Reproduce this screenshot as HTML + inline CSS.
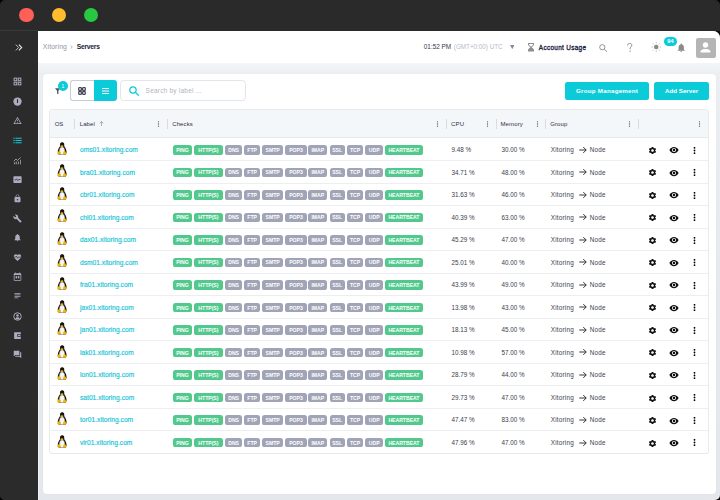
<!DOCTYPE html>
<html><head><meta charset="utf-8">
<style>
*{box-sizing:border-box;margin:0;padding:0}
html,body{width:720px;height:500px;overflow:hidden;background:#000;font-family:"Liberation Sans",sans-serif}
.a{position:absolute}
#win{position:absolute;left:0;top:0;width:720px;height:500px;background:#2a2a2a;border-radius:5px;overflow:hidden}
.tl{position:absolute;top:7.8px;width:14.5px;height:14.5px;border-radius:50%}
#side{position:absolute;left:0;top:30px;width:37.5px;height:470px;background:#2b2b2b;border-top:1px solid #3a3a3a}
.si{position:absolute;left:12.9px;width:9px;height:9px}
.si svg,.hk svg,svg{display:block}
#main{position:absolute;left:37.5px;top:31px;width:682.5px;height:469px;background:linear-gradient(180deg,#f4f6f8 31px,#eceff2 42px,#e7eaee 200px,#e4e7eb 469px);border-top-right-radius:7px;overflow:hidden}
#hdr{position:absolute;left:0;top:0;width:100%;height:31.5px;background:#fff}
#lstrip{position:absolute;left:0;top:31px;width:1.5px;height:438px;background:#f1f3f6}
#card{position:absolute;left:5px;top:42.5px;width:673px;height:420px;background:#fff;border-radius:4px;box-shadow:0 0 2px rgba(40,50,70,.06)}
#tbl{position:absolute;left:49.5px;top:109.5px;width:659.3px;height:344px;border-radius:3px;overflow:hidden}
#tblb{position:absolute;left:49px;top:109px;width:660px;height:345px;border:1px solid #e9eaec;border-radius:3px}
#th{position:absolute;left:0;top:0;width:100%;height:28px;background:#f4f7fa;border-bottom:1px solid #e8e9eb}
.hc{position:absolute;top:11px;font-size:6px;color:#2d2f45;line-height:7px;white-space:nowrap;letter-spacing:.12px}
.sep{position:absolute;top:9.5px;width:1px;height:9.5px;background:#d9dce2}
.hk{position:absolute;top:11px}
.row{position:absolute;left:0;width:659px;height:22.55px;border-bottom:1px solid #eceef1}
.ab{position:absolute;line-height:0}
.ab svg{display:block}
.lbl{position:absolute;top:7.5px;font-size:6.6px;line-height:7px;color:#12c4d7;white-space:nowrap;letter-spacing:.04px;-webkit-text-stroke:.15px #12c4d7}
.txt{position:absolute;top:7.6px;font-size:6.3px;line-height:7px;color:#3b3d4c;white-space:nowrap}
.bd{position:absolute;top:6.6px;height:9.6px;border-radius:2.6px;color:#fff;font-size:5.1px;font-weight:bold;line-height:9.6px;padding-top:.8px;text-align:center;white-space:nowrap}
.bd.g{background:#52c98c}
.bd.s{background:#a1a4b6}
.btn{position:absolute;top:82px;height:17.5px;background:#0ccbd9;border-radius:2.5px;color:#fff;font-size:6.2px;font-weight:bold;line-height:17.5px;text-align:center;white-space:nowrap}
</style></head><body>
<div id="win">
 <div class="tl" style="left:19px;background:#fe5f57"></div>
 <div class="tl" style="left:51.8px;background:#febc2e"></div>
 <div class="tl" style="left:83.8px;background:#28c840"></div>

 <div id="side">
  <svg class="a" style="left:15px;top:12.6px" width="8" height="7" viewBox="0 0 8 7"><path d="M0.8 0.6L3.6 3.5L0.8 6.4" fill="none" stroke="#bdbdbd" stroke-width="1"/><path d="M3.9 0.6L6.7 3.5L3.9 6.4" fill="none" stroke="#e6e6e6" stroke-width="1.1"/></svg>
  <div class="si" style="top:46.1px"><svg width="9" height="9" viewBox="0 0 24 24"><g fill="none" stroke="#aeabc0" stroke-width="2.6"><rect x="3" y="3" width="7" height="7"/><rect x="14" y="3" width="7" height="7"/><rect x="3" y="14" width="7" height="7"/><rect x="14" y="14" width="7" height="7"/></g></svg></div><div class="si" style="top:65.7px"><svg width="9" height="9" viewBox="0 0 24 24"><circle cx="12" cy="12" r="11" fill="#aeabc0"/><path d="M12 6v10" stroke="#2b2b2b" stroke-width="3"/></svg></div><div class="si" style="top:85.0px"><svg width="9" height="9" viewBox="0 0 24 24"><path fill="#aeabc0" d="M12 5.99L19.53 19H4.47L12 5.99M12 2L1 21h22L12 2zm1 14h-2v2h2v-2zm0-6h-2v4h2v-4z"/></svg></div><div class="si" style="top:104.5px"><svg width="9" height="9" viewBox="0 0 24 24"><path fill="#14cad9" d="M1 13.5h3.5v-3H1zm0 6h3.5v-3H1zm0-12h3.5v-3H1zm5.5 6H23v-3H6.5zm0 6H23v-3H6.5zm0-15v3H23v-3z"/></svg></div><div class="si" style="top:124.5px"><svg width="9" height="9" viewBox="0 0 24 24"><path fill="none" stroke="#aeabc0" stroke-width="2.2" d="M2 14l6-6 4 4 8-8"/><path fill="#aeabc0" d="M3 22v-4l3-3v7zM9 22v-8l2 2v6zM14 22v-6l2-2v8zM19 22V11l2-2v13z"/></svg></div><div class="si" style="top:143.8px"><svg width="9" height="9" viewBox="0 0 24 24"><rect x="1" y="3" width="22" height="18" rx="2" fill="#aeabc0"/><path d="M4 13h4l2-3 3 5 2-3h5" fill="none" stroke="#2b2b2b" stroke-width="1.8"/></svg></div><div class="si" style="top:162.9px"><svg width="9" height="9" viewBox="0 0 24 24"><path fill="#aeabc0" d="M18 8h-1V6c0-2.76-2.24-5-5-5S7 3.24 7 6v2H6c-1.1 0-2 .9-2 2v10c0 1.1.9 2 2 2h12c1.1 0 2-.9 2-2V10c0-1.1-.9-2-2-2zm-6 9c-1.1 0-2-.9-2-2s.9-2 2-2 2 .9 2 2-.9 2-2 2zm3.1-9H8.9V6c0-1.71 1.39-3.1 3.1-3.1 1.71 0 3.1 1.39 3.1 3.1v2z"/></svg></div><div class="si" style="top:183.0px"><svg width="9" height="9" viewBox="0 0 24 24"><path fill="#aeabc0" d="M22.7 19l-9.1-9.1c.9-2.3.4-5-1.5-6.9-2-2-5-2.4-7.4-1.3L9 6 6 9 1.6 4.7C.4 7.1.9 10.1 2.9 12.1c1.9 1.9 4.6 2.4 6.9 1.5l9.1 9.1c.4.4 1 .4 1.4 0l2.3-2.3c.5-.4.5-1.1.1-1.4z"/></svg></div><div class="si" style="top:202.4px"><svg width="9" height="9" viewBox="0 0 24 24"><path fill="#aeabc0" d="M12 22c1.1 0 2-.9 2-2h-4c0 1.1.89 2 2 2zm6-6v-5c0-3.07-1.64-5.64-4.5-6.32V4c0-.83-.67-1.5-1.5-1.5s-1.5.67-1.5 1.5v.68C7.63 5.36 6 7.92 6 11v5l-2 2v1h16v-1l-2-2z"/></svg></div><div class="si" style="top:221.9px"><svg width="9" height="9" viewBox="0 0 24 24"><path fill="#aeabc0" d="M12 21.35l-1.45-1.32C5.4 15.36 2 12.28 2 8.5 2 5.42 4.42 3 7.5 3c1.74 0 3.41.81 4.5 2.09C13.09 3.81 14.76 3 16.5 3 19.58 3 22 5.42 22 8.5c0 3.78-3.4 6.86-8.55 11.54L12 21.35z"/><path d="M2 11h5l2-3 3 6 2-3h8" fill="none" stroke="#2b2b2b" stroke-width="1.8"/></svg></div><div class="si" style="top:241.4px"><svg width="9" height="9" viewBox="0 0 24 24"><path fill="#aeabc0" d="M20 3h-1V1h-2v2H7V1H5v2H4c-1.1 0-2 .9-2 2v16c0 1.1.9 2 2 2h16c1.1 0 2-.9 2-2V5c0-1.1-.9-2-2-2zm0 18H4V8h16v13z"/><rect x="7" y="11" width="4" height="6" fill="#aeabc0"/><rect x="13" y="11" width="4" height="6" fill="#aeabc0"/></svg></div><div class="si" style="top:260.4px"><svg width="9" height="9" viewBox="0 0 24 24"><path fill="#aeabc0" d="M14 17H4v2h10v-2zm6-8H4v2h16V9zM4 15h16v-2H4v2zM4 5v2h16V5H4z"/></svg></div><div class="si" style="top:280.5px"><svg width="9" height="9" viewBox="0 0 24 24"><circle cx="12" cy="12" r="10" fill="none" stroke="#aeabc0" stroke-width="2.6"/><circle cx="12" cy="9.3" r="3.3" fill="#aeabc0"/><path d="M5.8 17.6c1.6-2.4 3.6-3.4 6.2-3.4s4.6 1 6.2 3.4c-1.6 1.7-3.8 2.6-6.2 2.6s-4.6-.9-6.2-2.6z" fill="#aeabc0"/></svg></div><div class="si" style="top:300.0px"><svg width="9" height="9" viewBox="0 0 24 24"><rect x="3" y="3" width="18" height="18" rx="1.5" fill="#aeabc0"/><rect x="11" y="8.5" width="12" height="7" rx="1" fill="#2b2b2b"/><rect x="13" y="10.5" width="7" height="3" fill="#aeabc0"/><rect x="7" y="7" width="3" height="10" fill="#2b2b2b" opacity="0"/></svg></div><div class="si" style="top:319.2px"><svg width="9" height="9" viewBox="0 0 24 24"><path fill="#aeabc0" d="M21 6h-2v9H6v2c0 .55.45 1 1 1h11l4 4V7c0-.55-.45-1-1-1zm-4 6V3c0-.55-.45-1-1-1H3c-.55 0-1 .45-1 1v14l4-4h10c.55 0 1-.45 1-1z"/></svg></div>
 </div>

 <div class="a" style="left:710px;top:31px;width:10px;height:10px;background:#0c0c0c"></div>
 <div id="main">
  <div id="hdr"></div><div id="lstrip"></div>
  <div id="card"></div>
 </div>

 <!-- header content (page coords) -->
 <div class="a" style="left:42.8px;top:43.3px;font-size:6.8px;line-height:8px;color:#9294a9;white-space:nowrap;letter-spacing:.15px">Xitoring</div>
 <svg class="a" style="left:70.2px;top:45px" width="3" height="4" viewBox="0 0 3 4"><path d="M0.5 0.3L2.3 2L0.5 3.7" fill="none" stroke="#9a9cb0" stroke-width=".7"/></svg>
 <div class="a" style="left:76.8px;top:43.3px;font-size:6.8px;line-height:8px;color:#1c1e3c;font-weight:bold;white-space:nowrap;letter-spacing:-.3px">Servers</div>

 <div class="a" style="left:423.8px;top:43.4px;font-size:6.4px;line-height:8px;color:#34364c;white-space:nowrap">01:52 PM</div>
 <div class="a" style="left:453.8px;top:43.4px;font-size:6.4px;line-height:8px;color:#b7bac9;white-space:nowrap;letter-spacing:-.05px">(GMT+0:00) UTC</div>
 <svg class="a" style="left:509.7px;top:45px" width="4.5" height="4.2" viewBox="0 0 4.5 4.2"><path d="M0 0H4.5L2.25 4.2z" fill="#8587a3"/></svg>
 <svg class="a" style="left:527.5px;top:43px" width="6" height="8.6" viewBox="0 0 6 8.6"><path d="M0 0H6V1.6C6 2.6 4.2 3.8 3.6 4.3C4.2 4.8 6 6 6 7V8.6H0V7C0 6 1.8 4.8 2.4 4.3C1.8 3.8 0 2.6 0 1.6z" fill="#8e8e8e"/><path d="M1 .9H5V1.5C5 2.1 3.6 3.1 3 3.6C2.4 3.1 1 2.1 1 1.5z" fill="#fff"/></svg>
 <div class="a" style="left:538.8px;top:43.5px;font-size:6.4px;line-height:8px;color:#20223f;white-space:nowrap;-webkit-text-stroke:.3px #20223f;letter-spacing:.32px">Account Usage</div>
 <svg class="a" style="left:598.5px;top:43.5px" width="9" height="8" viewBox="0 0 9 8"><circle cx="3.3" cy="3.2" r="2.6" fill="none" stroke="#8a8a8a" stroke-width=".9"/><path d="M5.2 5.1L7.9 7.7" stroke="#8a8a8a" stroke-width="1"/></svg>
 <svg class="a" style="left:627.4px;top:43.2px" width="5.4" height="9" viewBox="0 0 5.4 9"><path d="M.6 2.4C.6 1.1 1.5.4 2.7.4s2.1.8 2.1 1.9c0 1.5-1.7 1.6-1.7 3.4v.6" fill="none" stroke="#858585" stroke-width="1"/><circle cx="3.1" cy="8.2" r=".65" fill="#858585"/></svg>
 <svg class="a" style="left:650.5px;top:42.2px" width="10.5" height="10" viewBox="0 0 10.5 10"><circle cx="5.25" cy="5" r="2.3" fill="#8a8a8a"/><g stroke="#a0a0a0" stroke-width=".75"><path d="M5.25 .2V1.5M5.25 8.5V9.8M.4 5H1.7M8.8 5H10.1M1.8 1.5L2.7 2.4M7.8 7.6L8.7 8.5M1.8 8.5L2.7 7.6M7.8 2.4L8.7 1.5"/></g></svg>
 <div class="a" style="left:677px;top:42.8px"><svg width="8.5" height="9.5" viewBox="0 0 24 26"><path fill="#8a8a8a" d="M12 25.5c1.4 0 2.5-1.1 2.5-2.5h-5c0 1.4 1.1 2.5 2.5 2.5zm7.5-7.5v-6.2c0-3.8-2-7-5.6-7.8V3a1.9 1.9 0 0 0-3.8 0v1c-3.6.8-5.6 4-5.6 7.8V18L2 20.5v1.3h20v-1.3z"/></svg></div>
 <div class="a" style="left:663.8px;top:36.7px;width:13.2px;height:9.3px;border-radius:4.6px;background:#0ccbd9;color:#fff;font-size:5.6px;font-weight:bold;line-height:9.3px;text-align:center">94</div>
 <div class="a" style="left:695.8px;top:37.6px;width:20.2px;height:20px;background:#b5b5b5;border-radius:2px"></div>
 <svg class="a" style="left:698.2px;top:39.9px" width="15" height="15" viewBox="0 0 24 24"><circle cx="12" cy="8" r="4.4" fill="#fff"/><path fill="#fff" d="M12 14.2c-2.9 0-8 1.3-8 4v1.8h16v-1.8c0-2.7-5.1-4-8-4z"/></svg>

 <!-- toolbar -->
 <svg class="a" style="left:54.5px;top:87.6px" width="5.4" height="6.4" viewBox="0 0 5.4 6.4"><path d="M0 .2H5.4L3.4 2.8V6.4L2 5.6V2.8z" fill="#555"/></svg>
 <div class="a" style="left:58px;top:80.8px;width:10px;height:10px;border-radius:50%;background:#0ccbd9;color:#fff;font-size:5px;line-height:10px;text-align:center">1</div>
 <div class="a" style="left:70px;top:80.4px;width:25px;height:20.3px;border:1px solid #c9ccd6;border-right:none;border-radius:3px 0 0 3px;background:#fff"></div>
 <div class="a" style="left:93.8px;top:80.4px;width:23.2px;height:20.3px;background:#0ccbd9;border-radius:0 3px 3px 0"></div>
 </div>
 <svg class="a" style="left:78px;top:87px" width="8" height="8" viewBox="0 0 8 8"><g fill="none" stroke="#45455a" stroke-width="1.2"><rect x=".7" y=".7" width="2.7" height="2.7" rx=".5"/><rect x="4.6" y=".7" width="2.7" height="2.7" rx=".5"/><rect x=".7" y="4.6" width="2.7" height="2.7" rx=".5"/><rect x="4.6" y="4.6" width="2.7" height="2.7" rx=".5"/></g></svg>
 <svg class="a" style="left:101.9px;top:88px" width="7.2" height="6" viewBox="0 0 7.2 6"><path d="M0 .5H7.2M0 3H7.2M0 5.5H7.2" stroke="#fff" stroke-width="1"/></svg>
 <div class="a" style="left:120px;top:79.6px;width:125.6px;height:21.9px;border:1px solid #e3e5ec;border-radius:3.5px;background:#fff"></div>
 <svg class="a" style="left:129.2px;top:85.7px" width="10.5" height="10" viewBox="0 0 10.5 10"><circle cx="4" cy="4" r="3.2" fill="none" stroke="#0ccbd9" stroke-width="1.2"/><path d="M6.3 6.3L9.8 9.6" stroke="#0ccbd9" stroke-width="1.3"/></svg>
 <div class="a" style="left:145.6px;top:87px;font-size:6.5px;line-height:8px;color:#b2b4c2;white-space:nowrap;letter-spacing:.22px">Search by label ...</div>
 <div class="btn" style="left:564.9px;width:84.4px;letter-spacing:.25px">Group Management</div>
 <div class="btn" style="left:653.8px;width:55.5px">Add Server</div>

 <!-- table -->
 <div id="tbl">
  <div id="th">
   <div class="hc" style="left:5.2px;letter-spacing:-.15px">OS</div>
   <div class="sep" style="left:24.4px"></div>
   <div class="hc" style="left:30.2px">Label</div>
   <svg class="a" style="left:49.5px;top:11.7px" width="5" height="5" viewBox="0 0 5 5"><path d="M2.5 5V.6M.7 2.3L2.5 .5L4.3 2.3" fill="none" stroke="#888" stroke-width=".65"/></svg>
   <div class="hk" style="left:107.8px"><svg viewBox="0 0 3 6" width="3" height="6"><circle cx="1.5" cy=".8" r=".65" fill="#5c5c66"/><circle cx="1.5" cy="3" r=".65" fill="#5c5c66"/><circle cx="1.5" cy="5.2" r=".65" fill="#5c5c66"/></svg></div>
   <div class="sep" style="left:117.4px"></div>
   <div class="hc" style="left:122.7px">Checks</div>
   <div class="hk" style="left:386.3px"><svg viewBox="0 0 3 6" width="3" height="6"><circle cx="1.5" cy=".8" r=".65" fill="#5c5c66"/><circle cx="1.5" cy="3" r=".65" fill="#5c5c66"/><circle cx="1.5" cy="5.2" r=".65" fill="#5c5c66"/></svg></div>
   <div class="sep" style="left:396.7px"></div>
   <div class="hc" style="left:401.6px">CPU</div>
   <div class="hk" style="left:436.3px"><svg viewBox="0 0 3 6" width="3" height="6"><circle cx="1.5" cy=".8" r=".65" fill="#5c5c66"/><circle cx="1.5" cy="3" r=".65" fill="#5c5c66"/><circle cx="1.5" cy="5.2" r=".65" fill="#5c5c66"/></svg></div>
   <div class="sep" style="left:446px"></div>
   <div class="hc" style="left:451px">Memory</div>
   <div class="hk" style="left:486.1px"><svg viewBox="0 0 3 6" width="3" height="6"><circle cx="1.5" cy=".8" r=".65" fill="#5c5c66"/><circle cx="1.5" cy="3" r=".65" fill="#5c5c66"/><circle cx="1.5" cy="5.2" r=".65" fill="#5c5c66"/></svg></div>
   <div class="sep" style="left:495.6px"></div>
   <div class="hc" style="left:500.7px">Group</div>
   <div class="hk" style="left:578.6px"><svg viewBox="0 0 3 6" width="3" height="6"><circle cx="1.5" cy=".8" r=".65" fill="#5c5c66"/><circle cx="1.5" cy="3" r=".65" fill="#5c5c66"/><circle cx="1.5" cy="5.2" r=".65" fill="#5c5c66"/></svg></div>
   <div class="sep" style="left:588.4px"></div>
   <div class="hk" style="left:648.6px"><svg viewBox="0 0 3 6" width="3" height="6"><circle cx="1.5" cy=".8" r=".65" fill="#5c5c66"/><circle cx="1.5" cy="3" r=".65" fill="#5c5c66"/><circle cx="1.5" cy="5.2" r=".65" fill="#5c5c66"/></svg></div>
   <div class="sep" style="left:658px"></div>
  </div>
  <div class="a" style="left:0;top:-109.5px">
<div class="row" style="top:138.50px"><div class="ab" style="left:3.7px;top:1.4px"><svg class="tux" viewBox="0 0 20 18" width="17.6" height="17.1" preserveAspectRatio="none"><path d="M10.1 2.5c-1.3 0-2.1 1-2.1 2.4 0 .9.1 1.4-.4 2.2C6.6 8.6 5.4 10.4 5.4 12.6c0 1.1.3 2 .8 2.7h8.4c.5-.7.8-1.6.8-2.7 0-2.2-1.2-4-2.2-5.5-.5-.8-.4-1.3-.4-2.2 0-1.4-.8-2.4-2.1-2.4z" fill="#151515"/><ellipse cx="10.3" cy="11.4" rx="3.1" ry="4" fill="#d9d9d9"/><ellipse cx="10.5" cy="11.6" rx="2.2" ry="3.3" fill="#f7f7f7"/><ellipse cx="10.1" cy="6.5" rx="1.7" ry=".9" fill="#f5b400"/><path d="M4.9 13.6c.5-.6 1.3-1.4 1.7-2.1.3-.4.9-.4 1.2 0 .4.7.8 1.6 1 2.3.3.9-.2 1.6-1 1.6-.9 0-1.8-.3-2.5-.6-.6-.3-.7-.8-.4-1.2z" fill="#f5b400"/><path d="M15.2 13.6c-.5-.6-1.1-1.4-1.5-2.1-.3-.4-.9-.4-1.2 0-.4.7-.8 1.6-1 2.3-.3.9.2 1.6 1 1.6.8 0 1.7-.3 2.3-.6.6-.3.7-.8.4-1.2z" fill="#f5b400"/></svg></div><div class="lbl" style="left:30.5px">oms01.xitoring.com</div><div class="bd g" style="left:123.3px;width:19.3px">PING</div><div class="bd g" style="left:144.3px;width:29.2px">HTTP(S)</div><div class="bd s" style="left:175.5px;width:17.2px">DNS</div><div class="bd s" style="left:194.8px;width:15.7px">FTP</div><div class="bd s" style="left:212.7px;width:20.8px">SMTP</div><div class="bd s" style="left:235.7px;width:21.5px">POP3</div><div class="bd s" style="left:258.6px;width:19.4px">IMAP</div><div class="bd s" style="left:280.1px;width:15.0px">SSL</div><div class="bd s" style="left:297.2px;width:16.6px">TCP</div><div class="bd s" style="left:315.9px;width:17.7px">UDP</div><div class="bd g" style="left:335.7px;width:37.5px">HEARTBEAT</div><div class="txt" style="left:402px">9.48 %</div><div class="txt" style="left:452px">30.00 %</div><div class="txt" style="left:501.3px;letter-spacing:.22px">Xitoring</div><div class="ab" style="left:529.5px;top:7.3px"><svg viewBox="0 0 8 8" width="8" height="8"><path d="M.3 4H7.2M4.3 1.1L7.2 4L4.3 6.9" fill="none" stroke="#2a2a2a" stroke-width=".95"/></svg></div><div class="txt" style="left:540.3px;letter-spacing:.25px">Node</div><div class="ab" style="left:598px;top:7.3px"><svg viewBox="0 0 24 24" width="9" height="9"><path fill="#111" d="M19.14 12.94c.04-.3.06-.61.06-.94 0-.32-.02-.64-.07-.94l2.03-1.58a.49.49 0 0 0 .12-.61l-1.92-3.32a.488.488 0 0 0-.59-.22l-2.39.96c-.5-.38-1.03-.7-1.62-.94l-.36-2.54a.484.484 0 0 0-.48-.41h-3.84c-.24 0-.43.17-.47.41l-.36 2.54c-.59.24-1.13.57-1.62.94l-2.39-.96c-.22-.08-.47 0-.59.22L2.74 8.87c-.12.21-.08.47.12.61l2.03 1.58c-.05.3-.09.63-.09.94s.02.64.07.94l-2.03 1.58a.49.49 0 0 0-.12.61l1.92 3.32c.12.22.37.29.59.22l2.39-.96c.5.38 1.03.7 1.62.94l.36 2.54c.05.24.24.41.48.41h3.84c.24 0 .44-.17.47-.41l.36-2.54c.59-.24 1.13-.56 1.62-.94l2.39.96c.22.08.47 0 .59-.22l1.92-3.32c.12-.22.07-.47-.12-.61l-2.01-1.58zM12 15.6c-1.98 0-3.6-1.62-3.6-3.6s1.62-3.6 3.6-3.6 3.6 1.62 3.6 3.6-1.62 3.6-3.6 3.6z"/></svg></div><div class="ab" style="left:619.3px;top:6.8px"><svg viewBox="0 0 24 24" width="10" height="10"><path fill="#111" d="M12 4.5C7 4.5 2.73 7.61 1 12c1.73 4.39 6 7.5 11 7.5s9.27-3.11 11-7.5c-1.73-4.39-6-7.5-11-7.5zM12 17c-2.76 0-5-2.24-5-5s2.24-5 5-5 5 2.24 5 5-2.24 5-5 5zm0-8c-1.66 0-3 1.34-3 3s1.34 3 3 3 3-1.34 3-3-1.34-3-3-3z"/></svg></div><div class="ab" style="left:643.3px;top:8.1px"><svg viewBox="0 0 3 7" width="3" height="7"><circle cx="1.5" cy=".85" r=".9" fill="#000"/><circle cx="1.5" cy="3.5" r=".9" fill="#000"/><circle cx="1.5" cy="6.15" r=".9" fill="#000"/></svg></div></div>
<div class="row" style="top:161.02px"><div class="ab" style="left:3.7px;top:1.4px"><svg class="tux" viewBox="0 0 20 18" width="17.6" height="17.1" preserveAspectRatio="none"><path d="M10.1 2.5c-1.3 0-2.1 1-2.1 2.4 0 .9.1 1.4-.4 2.2C6.6 8.6 5.4 10.4 5.4 12.6c0 1.1.3 2 .8 2.7h8.4c.5-.7.8-1.6.8-2.7 0-2.2-1.2-4-2.2-5.5-.5-.8-.4-1.3-.4-2.2 0-1.4-.8-2.4-2.1-2.4z" fill="#151515"/><ellipse cx="10.3" cy="11.4" rx="3.1" ry="4" fill="#d9d9d9"/><ellipse cx="10.5" cy="11.6" rx="2.2" ry="3.3" fill="#f7f7f7"/><ellipse cx="10.1" cy="6.5" rx="1.7" ry=".9" fill="#f5b400"/><path d="M4.9 13.6c.5-.6 1.3-1.4 1.7-2.1.3-.4.9-.4 1.2 0 .4.7.8 1.6 1 2.3.3.9-.2 1.6-1 1.6-.9 0-1.8-.3-2.5-.6-.6-.3-.7-.8-.4-1.2z" fill="#f5b400"/><path d="M15.2 13.6c-.5-.6-1.1-1.4-1.5-2.1-.3-.4-.9-.4-1.2 0-.4.7-.8 1.6-1 2.3-.3.9.2 1.6 1 1.6.8 0 1.7-.3 2.3-.6.6-.3.7-.8.4-1.2z" fill="#f5b400"/></svg></div><div class="lbl" style="left:30.5px">bra01.xitoring.com</div><div class="bd g" style="left:123.3px;width:19.3px">PING</div><div class="bd g" style="left:144.3px;width:29.2px">HTTP(S)</div><div class="bd s" style="left:175.5px;width:17.2px">DNS</div><div class="bd s" style="left:194.8px;width:15.7px">FTP</div><div class="bd s" style="left:212.7px;width:20.8px">SMTP</div><div class="bd s" style="left:235.7px;width:21.5px">POP3</div><div class="bd s" style="left:258.6px;width:19.4px">IMAP</div><div class="bd s" style="left:280.1px;width:15.0px">SSL</div><div class="bd s" style="left:297.2px;width:16.6px">TCP</div><div class="bd s" style="left:315.9px;width:17.7px">UDP</div><div class="bd g" style="left:335.7px;width:37.5px">HEARTBEAT</div><div class="txt" style="left:402px">34.71 %</div><div class="txt" style="left:452px">48.00 %</div><div class="txt" style="left:501.3px;letter-spacing:.22px">Xitoring</div><div class="ab" style="left:529.5px;top:7.3px"><svg viewBox="0 0 8 8" width="8" height="8"><path d="M.3 4H7.2M4.3 1.1L7.2 4L4.3 6.9" fill="none" stroke="#2a2a2a" stroke-width=".95"/></svg></div><div class="txt" style="left:540.3px;letter-spacing:.25px">Node</div><div class="ab" style="left:598px;top:7.3px"><svg viewBox="0 0 24 24" width="9" height="9"><path fill="#111" d="M19.14 12.94c.04-.3.06-.61.06-.94 0-.32-.02-.64-.07-.94l2.03-1.58a.49.49 0 0 0 .12-.61l-1.92-3.32a.488.488 0 0 0-.59-.22l-2.39.96c-.5-.38-1.03-.7-1.62-.94l-.36-2.54a.484.484 0 0 0-.48-.41h-3.84c-.24 0-.43.17-.47.41l-.36 2.54c-.59.24-1.13.57-1.62.94l-2.39-.96c-.22-.08-.47 0-.59.22L2.74 8.87c-.12.21-.08.47.12.61l2.03 1.58c-.05.3-.09.63-.09.94s.02.64.07.94l-2.03 1.58a.49.49 0 0 0-.12.61l1.92 3.32c.12.22.37.29.59.22l2.39-.96c.5.38 1.03.7 1.62.94l.36 2.54c.05.24.24.41.48.41h3.84c.24 0 .44-.17.47-.41l.36-2.54c.59-.24 1.13-.56 1.62-.94l2.39.96c.22.08.47 0 .59-.22l1.92-3.32c.12-.22.07-.47-.12-.61l-2.01-1.58zM12 15.6c-1.98 0-3.6-1.62-3.6-3.6s1.62-3.6 3.6-3.6 3.6 1.62 3.6 3.6-1.62 3.6-3.6 3.6z"/></svg></div><div class="ab" style="left:619.3px;top:6.8px"><svg viewBox="0 0 24 24" width="10" height="10"><path fill="#111" d="M12 4.5C7 4.5 2.73 7.61 1 12c1.73 4.39 6 7.5 11 7.5s9.27-3.11 11-7.5c-1.73-4.39-6-7.5-11-7.5zM12 17c-2.76 0-5-2.24-5-5s2.24-5 5-5 5 2.24 5 5-2.24 5-5 5zm0-8c-1.66 0-3 1.34-3 3s1.34 3 3 3 3-1.34 3-3-1.34-3-3-3z"/></svg></div><div class="ab" style="left:643.3px;top:8.1px"><svg viewBox="0 0 3 7" width="3" height="7"><circle cx="1.5" cy=".85" r=".9" fill="#000"/><circle cx="1.5" cy="3.5" r=".9" fill="#000"/><circle cx="1.5" cy="6.15" r=".9" fill="#000"/></svg></div></div>
<div class="row" style="top:183.54px"><div class="ab" style="left:3.7px;top:1.4px"><svg class="tux" viewBox="0 0 20 18" width="17.6" height="17.1" preserveAspectRatio="none"><path d="M10.1 2.5c-1.3 0-2.1 1-2.1 2.4 0 .9.1 1.4-.4 2.2C6.6 8.6 5.4 10.4 5.4 12.6c0 1.1.3 2 .8 2.7h8.4c.5-.7.8-1.6.8-2.7 0-2.2-1.2-4-2.2-5.5-.5-.8-.4-1.3-.4-2.2 0-1.4-.8-2.4-2.1-2.4z" fill="#151515"/><ellipse cx="10.3" cy="11.4" rx="3.1" ry="4" fill="#d9d9d9"/><ellipse cx="10.5" cy="11.6" rx="2.2" ry="3.3" fill="#f7f7f7"/><ellipse cx="10.1" cy="6.5" rx="1.7" ry=".9" fill="#f5b400"/><path d="M4.9 13.6c.5-.6 1.3-1.4 1.7-2.1.3-.4.9-.4 1.2 0 .4.7.8 1.6 1 2.3.3.9-.2 1.6-1 1.6-.9 0-1.8-.3-2.5-.6-.6-.3-.7-.8-.4-1.2z" fill="#f5b400"/><path d="M15.2 13.6c-.5-.6-1.1-1.4-1.5-2.1-.3-.4-.9-.4-1.2 0-.4.7-.8 1.6-1 2.3-.3.9.2 1.6 1 1.6.8 0 1.7-.3 2.3-.6.6-.3.7-.8.4-1.2z" fill="#f5b400"/></svg></div><div class="lbl" style="left:30.5px">cbr01.xitoring.com</div><div class="bd g" style="left:123.3px;width:19.3px">PING</div><div class="bd g" style="left:144.3px;width:29.2px">HTTP(S)</div><div class="bd s" style="left:175.5px;width:17.2px">DNS</div><div class="bd s" style="left:194.8px;width:15.7px">FTP</div><div class="bd s" style="left:212.7px;width:20.8px">SMTP</div><div class="bd s" style="left:235.7px;width:21.5px">POP3</div><div class="bd s" style="left:258.6px;width:19.4px">IMAP</div><div class="bd s" style="left:280.1px;width:15.0px">SSL</div><div class="bd s" style="left:297.2px;width:16.6px">TCP</div><div class="bd s" style="left:315.9px;width:17.7px">UDP</div><div class="bd g" style="left:335.7px;width:37.5px">HEARTBEAT</div><div class="txt" style="left:402px">31.63 %</div><div class="txt" style="left:452px">46.00 %</div><div class="txt" style="left:501.3px;letter-spacing:.22px">Xitoring</div><div class="ab" style="left:529.5px;top:7.3px"><svg viewBox="0 0 8 8" width="8" height="8"><path d="M.3 4H7.2M4.3 1.1L7.2 4L4.3 6.9" fill="none" stroke="#2a2a2a" stroke-width=".95"/></svg></div><div class="txt" style="left:540.3px;letter-spacing:.25px">Node</div><div class="ab" style="left:598px;top:7.3px"><svg viewBox="0 0 24 24" width="9" height="9"><path fill="#111" d="M19.14 12.94c.04-.3.06-.61.06-.94 0-.32-.02-.64-.07-.94l2.03-1.58a.49.49 0 0 0 .12-.61l-1.92-3.32a.488.488 0 0 0-.59-.22l-2.39.96c-.5-.38-1.03-.7-1.62-.94l-.36-2.54a.484.484 0 0 0-.48-.41h-3.84c-.24 0-.43.17-.47.41l-.36 2.54c-.59.24-1.13.57-1.62.94l-2.39-.96c-.22-.08-.47 0-.59.22L2.74 8.87c-.12.21-.08.47.12.61l2.03 1.58c-.05.3-.09.63-.09.94s.02.64.07.94l-2.03 1.58a.49.49 0 0 0-.12.61l1.92 3.32c.12.22.37.29.59.22l2.39-.96c.5.38 1.03.7 1.62.94l.36 2.54c.05.24.24.41.48.41h3.84c.24 0 .44-.17.47-.41l.36-2.54c.59-.24 1.13-.56 1.62-.94l2.39.96c.22.08.47 0 .59-.22l1.92-3.32c.12-.22.07-.47-.12-.61l-2.01-1.58zM12 15.6c-1.98 0-3.6-1.62-3.6-3.6s1.62-3.6 3.6-3.6 3.6 1.62 3.6 3.6-1.62 3.6-3.6 3.6z"/></svg></div><div class="ab" style="left:619.3px;top:6.8px"><svg viewBox="0 0 24 24" width="10" height="10"><path fill="#111" d="M12 4.5C7 4.5 2.73 7.61 1 12c1.73 4.39 6 7.5 11 7.5s9.27-3.11 11-7.5c-1.73-4.39-6-7.5-11-7.5zM12 17c-2.76 0-5-2.24-5-5s2.24-5 5-5 5 2.24 5 5-2.24 5-5 5zm0-8c-1.66 0-3 1.34-3 3s1.34 3 3 3 3-1.34 3-3-1.34-3-3-3z"/></svg></div><div class="ab" style="left:643.3px;top:8.1px"><svg viewBox="0 0 3 7" width="3" height="7"><circle cx="1.5" cy=".85" r=".9" fill="#000"/><circle cx="1.5" cy="3.5" r=".9" fill="#000"/><circle cx="1.5" cy="6.15" r=".9" fill="#000"/></svg></div></div>
<div class="row" style="top:206.06px"><div class="ab" style="left:3.7px;top:1.4px"><svg class="tux" viewBox="0 0 20 18" width="17.6" height="17.1" preserveAspectRatio="none"><path d="M10.1 2.5c-1.3 0-2.1 1-2.1 2.4 0 .9.1 1.4-.4 2.2C6.6 8.6 5.4 10.4 5.4 12.6c0 1.1.3 2 .8 2.7h8.4c.5-.7.8-1.6.8-2.7 0-2.2-1.2-4-2.2-5.5-.5-.8-.4-1.3-.4-2.2 0-1.4-.8-2.4-2.1-2.4z" fill="#151515"/><ellipse cx="10.3" cy="11.4" rx="3.1" ry="4" fill="#d9d9d9"/><ellipse cx="10.5" cy="11.6" rx="2.2" ry="3.3" fill="#f7f7f7"/><ellipse cx="10.1" cy="6.5" rx="1.7" ry=".9" fill="#f5b400"/><path d="M4.9 13.6c.5-.6 1.3-1.4 1.7-2.1.3-.4.9-.4 1.2 0 .4.7.8 1.6 1 2.3.3.9-.2 1.6-1 1.6-.9 0-1.8-.3-2.5-.6-.6-.3-.7-.8-.4-1.2z" fill="#f5b400"/><path d="M15.2 13.6c-.5-.6-1.1-1.4-1.5-2.1-.3-.4-.9-.4-1.2 0-.4.7-.8 1.6-1 2.3-.3.9.2 1.6 1 1.6.8 0 1.7-.3 2.3-.6.6-.3.7-.8.4-1.2z" fill="#f5b400"/></svg></div><div class="lbl" style="left:30.5px">chi01.xitoring.com</div><div class="bd g" style="left:123.3px;width:19.3px">PING</div><div class="bd g" style="left:144.3px;width:29.2px">HTTP(S)</div><div class="bd s" style="left:175.5px;width:17.2px">DNS</div><div class="bd s" style="left:194.8px;width:15.7px">FTP</div><div class="bd s" style="left:212.7px;width:20.8px">SMTP</div><div class="bd s" style="left:235.7px;width:21.5px">POP3</div><div class="bd s" style="left:258.6px;width:19.4px">IMAP</div><div class="bd s" style="left:280.1px;width:15.0px">SSL</div><div class="bd s" style="left:297.2px;width:16.6px">TCP</div><div class="bd s" style="left:315.9px;width:17.7px">UDP</div><div class="bd g" style="left:335.7px;width:37.5px">HEARTBEAT</div><div class="txt" style="left:402px">40.39 %</div><div class="txt" style="left:452px">63.00 %</div><div class="txt" style="left:501.3px;letter-spacing:.22px">Xitoring</div><div class="ab" style="left:529.5px;top:7.3px"><svg viewBox="0 0 8 8" width="8" height="8"><path d="M.3 4H7.2M4.3 1.1L7.2 4L4.3 6.9" fill="none" stroke="#2a2a2a" stroke-width=".95"/></svg></div><div class="txt" style="left:540.3px;letter-spacing:.25px">Node</div><div class="ab" style="left:598px;top:7.3px"><svg viewBox="0 0 24 24" width="9" height="9"><path fill="#111" d="M19.14 12.94c.04-.3.06-.61.06-.94 0-.32-.02-.64-.07-.94l2.03-1.58a.49.49 0 0 0 .12-.61l-1.92-3.32a.488.488 0 0 0-.59-.22l-2.39.96c-.5-.38-1.03-.7-1.62-.94l-.36-2.54a.484.484 0 0 0-.48-.41h-3.84c-.24 0-.43.17-.47.41l-.36 2.54c-.59.24-1.13.57-1.62.94l-2.39-.96c-.22-.08-.47 0-.59.22L2.74 8.87c-.12.21-.08.47.12.61l2.03 1.58c-.05.3-.09.63-.09.94s.02.64.07.94l-2.03 1.58a.49.49 0 0 0-.12.61l1.92 3.32c.12.22.37.29.59.22l2.39-.96c.5.38 1.03.7 1.62.94l.36 2.54c.05.24.24.41.48.41h3.84c.24 0 .44-.17.47-.41l.36-2.54c.59-.24 1.13-.56 1.62-.94l2.39.96c.22.08.47 0 .59-.22l1.92-3.32c.12-.22.07-.47-.12-.61l-2.01-1.58zM12 15.6c-1.98 0-3.6-1.62-3.6-3.6s1.62-3.6 3.6-3.6 3.6 1.62 3.6 3.6-1.62 3.6-3.6 3.6z"/></svg></div><div class="ab" style="left:619.3px;top:6.8px"><svg viewBox="0 0 24 24" width="10" height="10"><path fill="#111" d="M12 4.5C7 4.5 2.73 7.61 1 12c1.73 4.39 6 7.5 11 7.5s9.27-3.11 11-7.5c-1.73-4.39-6-7.5-11-7.5zM12 17c-2.76 0-5-2.24-5-5s2.24-5 5-5 5 2.24 5 5-2.24 5-5 5zm0-8c-1.66 0-3 1.34-3 3s1.34 3 3 3 3-1.34 3-3-1.34-3-3-3z"/></svg></div><div class="ab" style="left:643.3px;top:8.1px"><svg viewBox="0 0 3 7" width="3" height="7"><circle cx="1.5" cy=".85" r=".9" fill="#000"/><circle cx="1.5" cy="3.5" r=".9" fill="#000"/><circle cx="1.5" cy="6.15" r=".9" fill="#000"/></svg></div></div>
<div class="row" style="top:228.58px"><div class="ab" style="left:3.7px;top:1.4px"><svg class="tux" viewBox="0 0 20 18" width="17.6" height="17.1" preserveAspectRatio="none"><path d="M10.1 2.5c-1.3 0-2.1 1-2.1 2.4 0 .9.1 1.4-.4 2.2C6.6 8.6 5.4 10.4 5.4 12.6c0 1.1.3 2 .8 2.7h8.4c.5-.7.8-1.6.8-2.7 0-2.2-1.2-4-2.2-5.5-.5-.8-.4-1.3-.4-2.2 0-1.4-.8-2.4-2.1-2.4z" fill="#151515"/><ellipse cx="10.3" cy="11.4" rx="3.1" ry="4" fill="#d9d9d9"/><ellipse cx="10.5" cy="11.6" rx="2.2" ry="3.3" fill="#f7f7f7"/><ellipse cx="10.1" cy="6.5" rx="1.7" ry=".9" fill="#f5b400"/><path d="M4.9 13.6c.5-.6 1.3-1.4 1.7-2.1.3-.4.9-.4 1.2 0 .4.7.8 1.6 1 2.3.3.9-.2 1.6-1 1.6-.9 0-1.8-.3-2.5-.6-.6-.3-.7-.8-.4-1.2z" fill="#f5b400"/><path d="M15.2 13.6c-.5-.6-1.1-1.4-1.5-2.1-.3-.4-.9-.4-1.2 0-.4.7-.8 1.6-1 2.3-.3.9.2 1.6 1 1.6.8 0 1.7-.3 2.3-.6.6-.3.7-.8.4-1.2z" fill="#f5b400"/></svg></div><div class="lbl" style="left:30.5px">dax01.xitoring.com</div><div class="bd g" style="left:123.3px;width:19.3px">PING</div><div class="bd g" style="left:144.3px;width:29.2px">HTTP(S)</div><div class="bd s" style="left:175.5px;width:17.2px">DNS</div><div class="bd s" style="left:194.8px;width:15.7px">FTP</div><div class="bd s" style="left:212.7px;width:20.8px">SMTP</div><div class="bd s" style="left:235.7px;width:21.5px">POP3</div><div class="bd s" style="left:258.6px;width:19.4px">IMAP</div><div class="bd s" style="left:280.1px;width:15.0px">SSL</div><div class="bd s" style="left:297.2px;width:16.6px">TCP</div><div class="bd s" style="left:315.9px;width:17.7px">UDP</div><div class="bd g" style="left:335.7px;width:37.5px">HEARTBEAT</div><div class="txt" style="left:402px">45.29 %</div><div class="txt" style="left:452px">47.00 %</div><div class="txt" style="left:501.3px;letter-spacing:.22px">Xitoring</div><div class="ab" style="left:529.5px;top:7.3px"><svg viewBox="0 0 8 8" width="8" height="8"><path d="M.3 4H7.2M4.3 1.1L7.2 4L4.3 6.9" fill="none" stroke="#2a2a2a" stroke-width=".95"/></svg></div><div class="txt" style="left:540.3px;letter-spacing:.25px">Node</div><div class="ab" style="left:598px;top:7.3px"><svg viewBox="0 0 24 24" width="9" height="9"><path fill="#111" d="M19.14 12.94c.04-.3.06-.61.06-.94 0-.32-.02-.64-.07-.94l2.03-1.58a.49.49 0 0 0 .12-.61l-1.92-3.32a.488.488 0 0 0-.59-.22l-2.39.96c-.5-.38-1.03-.7-1.62-.94l-.36-2.54a.484.484 0 0 0-.48-.41h-3.84c-.24 0-.43.17-.47.41l-.36 2.54c-.59.24-1.13.57-1.62.94l-2.39-.96c-.22-.08-.47 0-.59.22L2.74 8.87c-.12.21-.08.47.12.61l2.03 1.58c-.05.3-.09.63-.09.94s.02.64.07.94l-2.03 1.58a.49.49 0 0 0-.12.61l1.92 3.32c.12.22.37.29.59.22l2.39-.96c.5.38 1.03.7 1.62.94l.36 2.54c.05.24.24.41.48.41h3.84c.24 0 .44-.17.47-.41l.36-2.54c.59-.24 1.13-.56 1.62-.94l2.39.96c.22.08.47 0 .59-.22l1.92-3.32c.12-.22.07-.47-.12-.61l-2.01-1.58zM12 15.6c-1.98 0-3.6-1.62-3.6-3.6s1.62-3.6 3.6-3.6 3.6 1.62 3.6 3.6-1.62 3.6-3.6 3.6z"/></svg></div><div class="ab" style="left:619.3px;top:6.8px"><svg viewBox="0 0 24 24" width="10" height="10"><path fill="#111" d="M12 4.5C7 4.5 2.73 7.61 1 12c1.73 4.39 6 7.5 11 7.5s9.27-3.11 11-7.5c-1.73-4.39-6-7.5-11-7.5zM12 17c-2.76 0-5-2.24-5-5s2.24-5 5-5 5 2.24 5 5-2.24 5-5 5zm0-8c-1.66 0-3 1.34-3 3s1.34 3 3 3 3-1.34 3-3-1.34-3-3-3z"/></svg></div><div class="ab" style="left:643.3px;top:8.1px"><svg viewBox="0 0 3 7" width="3" height="7"><circle cx="1.5" cy=".85" r=".9" fill="#000"/><circle cx="1.5" cy="3.5" r=".9" fill="#000"/><circle cx="1.5" cy="6.15" r=".9" fill="#000"/></svg></div></div>
<div class="row" style="top:251.10px"><div class="ab" style="left:3.7px;top:1.4px"><svg class="tux" viewBox="0 0 20 18" width="17.6" height="17.1" preserveAspectRatio="none"><path d="M10.1 2.5c-1.3 0-2.1 1-2.1 2.4 0 .9.1 1.4-.4 2.2C6.6 8.6 5.4 10.4 5.4 12.6c0 1.1.3 2 .8 2.7h8.4c.5-.7.8-1.6.8-2.7 0-2.2-1.2-4-2.2-5.5-.5-.8-.4-1.3-.4-2.2 0-1.4-.8-2.4-2.1-2.4z" fill="#151515"/><ellipse cx="10.3" cy="11.4" rx="3.1" ry="4" fill="#d9d9d9"/><ellipse cx="10.5" cy="11.6" rx="2.2" ry="3.3" fill="#f7f7f7"/><ellipse cx="10.1" cy="6.5" rx="1.7" ry=".9" fill="#f5b400"/><path d="M4.9 13.6c.5-.6 1.3-1.4 1.7-2.1.3-.4.9-.4 1.2 0 .4.7.8 1.6 1 2.3.3.9-.2 1.6-1 1.6-.9 0-1.8-.3-2.5-.6-.6-.3-.7-.8-.4-1.2z" fill="#f5b400"/><path d="M15.2 13.6c-.5-.6-1.1-1.4-1.5-2.1-.3-.4-.9-.4-1.2 0-.4.7-.8 1.6-1 2.3-.3.9.2 1.6 1 1.6.8 0 1.7-.3 2.3-.6.6-.3.7-.8.4-1.2z" fill="#f5b400"/></svg></div><div class="lbl" style="left:30.5px">dsm01.xitoring.com</div><div class="bd g" style="left:123.3px;width:19.3px">PING</div><div class="bd g" style="left:144.3px;width:29.2px">HTTP(S)</div><div class="bd s" style="left:175.5px;width:17.2px">DNS</div><div class="bd s" style="left:194.8px;width:15.7px">FTP</div><div class="bd s" style="left:212.7px;width:20.8px">SMTP</div><div class="bd s" style="left:235.7px;width:21.5px">POP3</div><div class="bd s" style="left:258.6px;width:19.4px">IMAP</div><div class="bd s" style="left:280.1px;width:15.0px">SSL</div><div class="bd s" style="left:297.2px;width:16.6px">TCP</div><div class="bd s" style="left:315.9px;width:17.7px">UDP</div><div class="bd g" style="left:335.7px;width:37.5px">HEARTBEAT</div><div class="txt" style="left:402px">25.01 %</div><div class="txt" style="left:452px">40.00 %</div><div class="txt" style="left:501.3px;letter-spacing:.22px">Xitoring</div><div class="ab" style="left:529.5px;top:7.3px"><svg viewBox="0 0 8 8" width="8" height="8"><path d="M.3 4H7.2M4.3 1.1L7.2 4L4.3 6.9" fill="none" stroke="#2a2a2a" stroke-width=".95"/></svg></div><div class="txt" style="left:540.3px;letter-spacing:.25px">Node</div><div class="ab" style="left:598px;top:7.3px"><svg viewBox="0 0 24 24" width="9" height="9"><path fill="#111" d="M19.14 12.94c.04-.3.06-.61.06-.94 0-.32-.02-.64-.07-.94l2.03-1.58a.49.49 0 0 0 .12-.61l-1.92-3.32a.488.488 0 0 0-.59-.22l-2.39.96c-.5-.38-1.03-.7-1.62-.94l-.36-2.54a.484.484 0 0 0-.48-.41h-3.84c-.24 0-.43.17-.47.41l-.36 2.54c-.59.24-1.13.57-1.62.94l-2.39-.96c-.22-.08-.47 0-.59.22L2.74 8.87c-.12.21-.08.47.12.61l2.03 1.58c-.05.3-.09.63-.09.94s.02.64.07.94l-2.03 1.58a.49.49 0 0 0-.12.61l1.92 3.32c.12.22.37.29.59.22l2.39-.96c.5.38 1.03.7 1.62.94l.36 2.54c.05.24.24.41.48.41h3.84c.24 0 .44-.17.47-.41l.36-2.54c.59-.24 1.13-.56 1.62-.94l2.39.96c.22.08.47 0 .59-.22l1.92-3.32c.12-.22.07-.47-.12-.61l-2.01-1.58zM12 15.6c-1.98 0-3.6-1.62-3.6-3.6s1.62-3.6 3.6-3.6 3.6 1.62 3.6 3.6-1.62 3.6-3.6 3.6z"/></svg></div><div class="ab" style="left:619.3px;top:6.8px"><svg viewBox="0 0 24 24" width="10" height="10"><path fill="#111" d="M12 4.5C7 4.5 2.73 7.61 1 12c1.73 4.39 6 7.5 11 7.5s9.27-3.11 11-7.5c-1.73-4.39-6-7.5-11-7.5zM12 17c-2.76 0-5-2.24-5-5s2.24-5 5-5 5 2.24 5 5-2.24 5-5 5zm0-8c-1.66 0-3 1.34-3 3s1.34 3 3 3 3-1.34 3-3-1.34-3-3-3z"/></svg></div><div class="ab" style="left:643.3px;top:8.1px"><svg viewBox="0 0 3 7" width="3" height="7"><circle cx="1.5" cy=".85" r=".9" fill="#000"/><circle cx="1.5" cy="3.5" r=".9" fill="#000"/><circle cx="1.5" cy="6.15" r=".9" fill="#000"/></svg></div></div>
<div class="row" style="top:273.62px"><div class="ab" style="left:3.7px;top:1.4px"><svg class="tux" viewBox="0 0 20 18" width="17.6" height="17.1" preserveAspectRatio="none"><path d="M10.1 2.5c-1.3 0-2.1 1-2.1 2.4 0 .9.1 1.4-.4 2.2C6.6 8.6 5.4 10.4 5.4 12.6c0 1.1.3 2 .8 2.7h8.4c.5-.7.8-1.6.8-2.7 0-2.2-1.2-4-2.2-5.5-.5-.8-.4-1.3-.4-2.2 0-1.4-.8-2.4-2.1-2.4z" fill="#151515"/><ellipse cx="10.3" cy="11.4" rx="3.1" ry="4" fill="#d9d9d9"/><ellipse cx="10.5" cy="11.6" rx="2.2" ry="3.3" fill="#f7f7f7"/><ellipse cx="10.1" cy="6.5" rx="1.7" ry=".9" fill="#f5b400"/><path d="M4.9 13.6c.5-.6 1.3-1.4 1.7-2.1.3-.4.9-.4 1.2 0 .4.7.8 1.6 1 2.3.3.9-.2 1.6-1 1.6-.9 0-1.8-.3-2.5-.6-.6-.3-.7-.8-.4-1.2z" fill="#f5b400"/><path d="M15.2 13.6c-.5-.6-1.1-1.4-1.5-2.1-.3-.4-.9-.4-1.2 0-.4.7-.8 1.6-1 2.3-.3.9.2 1.6 1 1.6.8 0 1.7-.3 2.3-.6.6-.3.7-.8.4-1.2z" fill="#f5b400"/></svg></div><div class="lbl" style="left:30.5px">fra01.xitoring.com</div><div class="bd g" style="left:123.3px;width:19.3px">PING</div><div class="bd g" style="left:144.3px;width:29.2px">HTTP(S)</div><div class="bd s" style="left:175.5px;width:17.2px">DNS</div><div class="bd s" style="left:194.8px;width:15.7px">FTP</div><div class="bd s" style="left:212.7px;width:20.8px">SMTP</div><div class="bd s" style="left:235.7px;width:21.5px">POP3</div><div class="bd s" style="left:258.6px;width:19.4px">IMAP</div><div class="bd s" style="left:280.1px;width:15.0px">SSL</div><div class="bd s" style="left:297.2px;width:16.6px">TCP</div><div class="bd s" style="left:315.9px;width:17.7px">UDP</div><div class="bd g" style="left:335.7px;width:37.5px">HEARTBEAT</div><div class="txt" style="left:402px">43.99 %</div><div class="txt" style="left:452px">49.00 %</div><div class="txt" style="left:501.3px;letter-spacing:.22px">Xitoring</div><div class="ab" style="left:529.5px;top:7.3px"><svg viewBox="0 0 8 8" width="8" height="8"><path d="M.3 4H7.2M4.3 1.1L7.2 4L4.3 6.9" fill="none" stroke="#2a2a2a" stroke-width=".95"/></svg></div><div class="txt" style="left:540.3px;letter-spacing:.25px">Node</div><div class="ab" style="left:598px;top:7.3px"><svg viewBox="0 0 24 24" width="9" height="9"><path fill="#111" d="M19.14 12.94c.04-.3.06-.61.06-.94 0-.32-.02-.64-.07-.94l2.03-1.58a.49.49 0 0 0 .12-.61l-1.92-3.32a.488.488 0 0 0-.59-.22l-2.39.96c-.5-.38-1.03-.7-1.62-.94l-.36-2.54a.484.484 0 0 0-.48-.41h-3.84c-.24 0-.43.17-.47.41l-.36 2.54c-.59.24-1.13.57-1.62.94l-2.39-.96c-.22-.08-.47 0-.59.22L2.74 8.87c-.12.21-.08.47.12.61l2.03 1.58c-.05.3-.09.63-.09.94s.02.64.07.94l-2.03 1.58a.49.49 0 0 0-.12.61l1.92 3.32c.12.22.37.29.59.22l2.39-.96c.5.38 1.03.7 1.62.94l.36 2.54c.05.24.24.41.48.41h3.84c.24 0 .44-.17.47-.41l.36-2.54c.59-.24 1.13-.56 1.62-.94l2.39.96c.22.08.47 0 .59-.22l1.92-3.32c.12-.22.07-.47-.12-.61l-2.01-1.58zM12 15.6c-1.98 0-3.6-1.62-3.6-3.6s1.62-3.6 3.6-3.6 3.6 1.62 3.6 3.6-1.62 3.6-3.6 3.6z"/></svg></div><div class="ab" style="left:619.3px;top:6.8px"><svg viewBox="0 0 24 24" width="10" height="10"><path fill="#111" d="M12 4.5C7 4.5 2.73 7.61 1 12c1.73 4.39 6 7.5 11 7.5s9.27-3.11 11-7.5c-1.73-4.39-6-7.5-11-7.5zM12 17c-2.76 0-5-2.24-5-5s2.24-5 5-5 5 2.24 5 5-2.24 5-5 5zm0-8c-1.66 0-3 1.34-3 3s1.34 3 3 3 3-1.34 3-3-1.34-3-3-3z"/></svg></div><div class="ab" style="left:643.3px;top:8.1px"><svg viewBox="0 0 3 7" width="3" height="7"><circle cx="1.5" cy=".85" r=".9" fill="#000"/><circle cx="1.5" cy="3.5" r=".9" fill="#000"/><circle cx="1.5" cy="6.15" r=".9" fill="#000"/></svg></div></div>
<div class="row" style="top:296.14px"><div class="ab" style="left:3.7px;top:1.4px"><svg class="tux" viewBox="0 0 20 18" width="17.6" height="17.1" preserveAspectRatio="none"><path d="M10.1 2.5c-1.3 0-2.1 1-2.1 2.4 0 .9.1 1.4-.4 2.2C6.6 8.6 5.4 10.4 5.4 12.6c0 1.1.3 2 .8 2.7h8.4c.5-.7.8-1.6.8-2.7 0-2.2-1.2-4-2.2-5.5-.5-.8-.4-1.3-.4-2.2 0-1.4-.8-2.4-2.1-2.4z" fill="#151515"/><ellipse cx="10.3" cy="11.4" rx="3.1" ry="4" fill="#d9d9d9"/><ellipse cx="10.5" cy="11.6" rx="2.2" ry="3.3" fill="#f7f7f7"/><ellipse cx="10.1" cy="6.5" rx="1.7" ry=".9" fill="#f5b400"/><path d="M4.9 13.6c.5-.6 1.3-1.4 1.7-2.1.3-.4.9-.4 1.2 0 .4.7.8 1.6 1 2.3.3.9-.2 1.6-1 1.6-.9 0-1.8-.3-2.5-.6-.6-.3-.7-.8-.4-1.2z" fill="#f5b400"/><path d="M15.2 13.6c-.5-.6-1.1-1.4-1.5-2.1-.3-.4-.9-.4-1.2 0-.4.7-.8 1.6-1 2.3-.3.9.2 1.6 1 1.6.8 0 1.7-.3 2.3-.6.6-.3.7-.8.4-1.2z" fill="#f5b400"/></svg></div><div class="lbl" style="left:30.5px">jax01.xitoring.com</div><div class="bd g" style="left:123.3px;width:19.3px">PING</div><div class="bd g" style="left:144.3px;width:29.2px">HTTP(S)</div><div class="bd s" style="left:175.5px;width:17.2px">DNS</div><div class="bd s" style="left:194.8px;width:15.7px">FTP</div><div class="bd s" style="left:212.7px;width:20.8px">SMTP</div><div class="bd s" style="left:235.7px;width:21.5px">POP3</div><div class="bd s" style="left:258.6px;width:19.4px">IMAP</div><div class="bd s" style="left:280.1px;width:15.0px">SSL</div><div class="bd s" style="left:297.2px;width:16.6px">TCP</div><div class="bd s" style="left:315.9px;width:17.7px">UDP</div><div class="bd g" style="left:335.7px;width:37.5px">HEARTBEAT</div><div class="txt" style="left:402px">13.98 %</div><div class="txt" style="left:452px">43.00 %</div><div class="txt" style="left:501.3px;letter-spacing:.22px">Xitoring</div><div class="ab" style="left:529.5px;top:7.3px"><svg viewBox="0 0 8 8" width="8" height="8"><path d="M.3 4H7.2M4.3 1.1L7.2 4L4.3 6.9" fill="none" stroke="#2a2a2a" stroke-width=".95"/></svg></div><div class="txt" style="left:540.3px;letter-spacing:.25px">Node</div><div class="ab" style="left:598px;top:7.3px"><svg viewBox="0 0 24 24" width="9" height="9"><path fill="#111" d="M19.14 12.94c.04-.3.06-.61.06-.94 0-.32-.02-.64-.07-.94l2.03-1.58a.49.49 0 0 0 .12-.61l-1.92-3.32a.488.488 0 0 0-.59-.22l-2.39.96c-.5-.38-1.03-.7-1.62-.94l-.36-2.54a.484.484 0 0 0-.48-.41h-3.84c-.24 0-.43.17-.47.41l-.36 2.54c-.59.24-1.13.57-1.62.94l-2.39-.96c-.22-.08-.47 0-.59.22L2.74 8.87c-.12.21-.08.47.12.61l2.03 1.58c-.05.3-.09.63-.09.94s.02.64.07.94l-2.03 1.58a.49.49 0 0 0-.12.61l1.92 3.32c.12.22.37.29.59.22l2.39-.96c.5.38 1.03.7 1.62.94l.36 2.54c.05.24.24.41.48.41h3.84c.24 0 .44-.17.47-.41l.36-2.54c.59-.24 1.13-.56 1.62-.94l2.39.96c.22.08.47 0 .59-.22l1.92-3.32c.12-.22.07-.47-.12-.61l-2.01-1.58zM12 15.6c-1.98 0-3.6-1.62-3.6-3.6s1.62-3.6 3.6-3.6 3.6 1.62 3.6 3.6-1.62 3.6-3.6 3.6z"/></svg></div><div class="ab" style="left:619.3px;top:6.8px"><svg viewBox="0 0 24 24" width="10" height="10"><path fill="#111" d="M12 4.5C7 4.5 2.73 7.61 1 12c1.73 4.39 6 7.5 11 7.5s9.27-3.11 11-7.5c-1.73-4.39-6-7.5-11-7.5zM12 17c-2.76 0-5-2.24-5-5s2.24-5 5-5 5 2.24 5 5-2.24 5-5 5zm0-8c-1.66 0-3 1.34-3 3s1.34 3 3 3 3-1.34 3-3-1.34-3-3-3z"/></svg></div><div class="ab" style="left:643.3px;top:8.1px"><svg viewBox="0 0 3 7" width="3" height="7"><circle cx="1.5" cy=".85" r=".9" fill="#000"/><circle cx="1.5" cy="3.5" r=".9" fill="#000"/><circle cx="1.5" cy="6.15" r=".9" fill="#000"/></svg></div></div>
<div class="row" style="top:318.66px"><div class="ab" style="left:3.7px;top:1.4px"><svg class="tux" viewBox="0 0 20 18" width="17.6" height="17.1" preserveAspectRatio="none"><path d="M10.1 2.5c-1.3 0-2.1 1-2.1 2.4 0 .9.1 1.4-.4 2.2C6.6 8.6 5.4 10.4 5.4 12.6c0 1.1.3 2 .8 2.7h8.4c.5-.7.8-1.6.8-2.7 0-2.2-1.2-4-2.2-5.5-.5-.8-.4-1.3-.4-2.2 0-1.4-.8-2.4-2.1-2.4z" fill="#151515"/><ellipse cx="10.3" cy="11.4" rx="3.1" ry="4" fill="#d9d9d9"/><ellipse cx="10.5" cy="11.6" rx="2.2" ry="3.3" fill="#f7f7f7"/><ellipse cx="10.1" cy="6.5" rx="1.7" ry=".9" fill="#f5b400"/><path d="M4.9 13.6c.5-.6 1.3-1.4 1.7-2.1.3-.4.9-.4 1.2 0 .4.7.8 1.6 1 2.3.3.9-.2 1.6-1 1.6-.9 0-1.8-.3-2.5-.6-.6-.3-.7-.8-.4-1.2z" fill="#f5b400"/><path d="M15.2 13.6c-.5-.6-1.1-1.4-1.5-2.1-.3-.4-.9-.4-1.2 0-.4.7-.8 1.6-1 2.3-.3.9.2 1.6 1 1.6.8 0 1.7-.3 2.3-.6.6-.3.7-.8.4-1.2z" fill="#f5b400"/></svg></div><div class="lbl" style="left:30.5px">jan01.xitoring.com</div><div class="bd g" style="left:123.3px;width:19.3px">PING</div><div class="bd g" style="left:144.3px;width:29.2px">HTTP(S)</div><div class="bd s" style="left:175.5px;width:17.2px">DNS</div><div class="bd s" style="left:194.8px;width:15.7px">FTP</div><div class="bd s" style="left:212.7px;width:20.8px">SMTP</div><div class="bd s" style="left:235.7px;width:21.5px">POP3</div><div class="bd s" style="left:258.6px;width:19.4px">IMAP</div><div class="bd s" style="left:280.1px;width:15.0px">SSL</div><div class="bd s" style="left:297.2px;width:16.6px">TCP</div><div class="bd s" style="left:315.9px;width:17.7px">UDP</div><div class="bd g" style="left:335.7px;width:37.5px">HEARTBEAT</div><div class="txt" style="left:402px">18.13 %</div><div class="txt" style="left:452px">45.00 %</div><div class="txt" style="left:501.3px;letter-spacing:.22px">Xitoring</div><div class="ab" style="left:529.5px;top:7.3px"><svg viewBox="0 0 8 8" width="8" height="8"><path d="M.3 4H7.2M4.3 1.1L7.2 4L4.3 6.9" fill="none" stroke="#2a2a2a" stroke-width=".95"/></svg></div><div class="txt" style="left:540.3px;letter-spacing:.25px">Node</div><div class="ab" style="left:598px;top:7.3px"><svg viewBox="0 0 24 24" width="9" height="9"><path fill="#111" d="M19.14 12.94c.04-.3.06-.61.06-.94 0-.32-.02-.64-.07-.94l2.03-1.58a.49.49 0 0 0 .12-.61l-1.92-3.32a.488.488 0 0 0-.59-.22l-2.39.96c-.5-.38-1.03-.7-1.62-.94l-.36-2.54a.484.484 0 0 0-.48-.41h-3.84c-.24 0-.43.17-.47.41l-.36 2.54c-.59.24-1.13.57-1.62.94l-2.39-.96c-.22-.08-.47 0-.59.22L2.74 8.87c-.12.21-.08.47.12.61l2.03 1.58c-.05.3-.09.63-.09.94s.02.64.07.94l-2.03 1.58a.49.49 0 0 0-.12.61l1.92 3.32c.12.22.37.29.59.22l2.39-.96c.5.38 1.03.7 1.62.94l.36 2.54c.05.24.24.41.48.41h3.84c.24 0 .44-.17.47-.41l.36-2.54c.59-.24 1.13-.56 1.62-.94l2.39.96c.22.08.47 0 .59-.22l1.92-3.32c.12-.22.07-.47-.12-.61l-2.01-1.58zM12 15.6c-1.98 0-3.6-1.62-3.6-3.6s1.62-3.6 3.6-3.6 3.6 1.62 3.6 3.6-1.62 3.6-3.6 3.6z"/></svg></div><div class="ab" style="left:619.3px;top:6.8px"><svg viewBox="0 0 24 24" width="10" height="10"><path fill="#111" d="M12 4.5C7 4.5 2.73 7.61 1 12c1.73 4.39 6 7.5 11 7.5s9.27-3.11 11-7.5c-1.73-4.39-6-7.5-11-7.5zM12 17c-2.76 0-5-2.24-5-5s2.24-5 5-5 5 2.24 5 5-2.24 5-5 5zm0-8c-1.66 0-3 1.34-3 3s1.34 3 3 3 3-1.34 3-3-1.34-3-3-3z"/></svg></div><div class="ab" style="left:643.3px;top:8.1px"><svg viewBox="0 0 3 7" width="3" height="7"><circle cx="1.5" cy=".85" r=".9" fill="#000"/><circle cx="1.5" cy="3.5" r=".9" fill="#000"/><circle cx="1.5" cy="6.15" r=".9" fill="#000"/></svg></div></div>
<div class="row" style="top:341.18px"><div class="ab" style="left:3.7px;top:1.4px"><svg class="tux" viewBox="0 0 20 18" width="17.6" height="17.1" preserveAspectRatio="none"><path d="M10.1 2.5c-1.3 0-2.1 1-2.1 2.4 0 .9.1 1.4-.4 2.2C6.6 8.6 5.4 10.4 5.4 12.6c0 1.1.3 2 .8 2.7h8.4c.5-.7.8-1.6.8-2.7 0-2.2-1.2-4-2.2-5.5-.5-.8-.4-1.3-.4-2.2 0-1.4-.8-2.4-2.1-2.4z" fill="#151515"/><ellipse cx="10.3" cy="11.4" rx="3.1" ry="4" fill="#d9d9d9"/><ellipse cx="10.5" cy="11.6" rx="2.2" ry="3.3" fill="#f7f7f7"/><ellipse cx="10.1" cy="6.5" rx="1.7" ry=".9" fill="#f5b400"/><path d="M4.9 13.6c.5-.6 1.3-1.4 1.7-2.1.3-.4.9-.4 1.2 0 .4.7.8 1.6 1 2.3.3.9-.2 1.6-1 1.6-.9 0-1.8-.3-2.5-.6-.6-.3-.7-.8-.4-1.2z" fill="#f5b400"/><path d="M15.2 13.6c-.5-.6-1.1-1.4-1.5-2.1-.3-.4-.9-.4-1.2 0-.4.7-.8 1.6-1 2.3-.3.9.2 1.6 1 1.6.8 0 1.7-.3 2.3-.6.6-.3.7-.8.4-1.2z" fill="#f5b400"/></svg></div><div class="lbl" style="left:30.5px">lak01.xitoring.com</div><div class="bd g" style="left:123.3px;width:19.3px">PING</div><div class="bd g" style="left:144.3px;width:29.2px">HTTP(S)</div><div class="bd s" style="left:175.5px;width:17.2px">DNS</div><div class="bd s" style="left:194.8px;width:15.7px">FTP</div><div class="bd s" style="left:212.7px;width:20.8px">SMTP</div><div class="bd s" style="left:235.7px;width:21.5px">POP3</div><div class="bd s" style="left:258.6px;width:19.4px">IMAP</div><div class="bd s" style="left:280.1px;width:15.0px">SSL</div><div class="bd s" style="left:297.2px;width:16.6px">TCP</div><div class="bd s" style="left:315.9px;width:17.7px">UDP</div><div class="bd g" style="left:335.7px;width:37.5px">HEARTBEAT</div><div class="txt" style="left:402px">10.98 %</div><div class="txt" style="left:452px">57.00 %</div><div class="txt" style="left:501.3px;letter-spacing:.22px">Xitoring</div><div class="ab" style="left:529.5px;top:7.3px"><svg viewBox="0 0 8 8" width="8" height="8"><path d="M.3 4H7.2M4.3 1.1L7.2 4L4.3 6.9" fill="none" stroke="#2a2a2a" stroke-width=".95"/></svg></div><div class="txt" style="left:540.3px;letter-spacing:.25px">Node</div><div class="ab" style="left:598px;top:7.3px"><svg viewBox="0 0 24 24" width="9" height="9"><path fill="#111" d="M19.14 12.94c.04-.3.06-.61.06-.94 0-.32-.02-.64-.07-.94l2.03-1.58a.49.49 0 0 0 .12-.61l-1.92-3.32a.488.488 0 0 0-.59-.22l-2.39.96c-.5-.38-1.03-.7-1.62-.94l-.36-2.54a.484.484 0 0 0-.48-.41h-3.84c-.24 0-.43.17-.47.41l-.36 2.54c-.59.24-1.13.57-1.62.94l-2.39-.96c-.22-.08-.47 0-.59.22L2.74 8.87c-.12.21-.08.47.12.61l2.03 1.58c-.05.3-.09.63-.09.94s.02.64.07.94l-2.03 1.58a.49.49 0 0 0-.12.61l1.92 3.32c.12.22.37.29.59.22l2.39-.96c.5.38 1.03.7 1.62.94l.36 2.54c.05.24.24.41.48.41h3.84c.24 0 .44-.17.47-.41l.36-2.54c.59-.24 1.13-.56 1.62-.94l2.39.96c.22.08.47 0 .59-.22l1.92-3.32c.12-.22.07-.47-.12-.61l-2.01-1.58zM12 15.6c-1.98 0-3.6-1.62-3.6-3.6s1.62-3.6 3.6-3.6 3.6 1.62 3.6 3.6-1.62 3.6-3.6 3.6z"/></svg></div><div class="ab" style="left:619.3px;top:6.8px"><svg viewBox="0 0 24 24" width="10" height="10"><path fill="#111" d="M12 4.5C7 4.5 2.73 7.61 1 12c1.73 4.39 6 7.5 11 7.5s9.27-3.11 11-7.5c-1.73-4.39-6-7.5-11-7.5zM12 17c-2.76 0-5-2.24-5-5s2.24-5 5-5 5 2.24 5 5-2.24 5-5 5zm0-8c-1.66 0-3 1.34-3 3s1.34 3 3 3 3-1.34 3-3-1.34-3-3-3z"/></svg></div><div class="ab" style="left:643.3px;top:8.1px"><svg viewBox="0 0 3 7" width="3" height="7"><circle cx="1.5" cy=".85" r=".9" fill="#000"/><circle cx="1.5" cy="3.5" r=".9" fill="#000"/><circle cx="1.5" cy="6.15" r=".9" fill="#000"/></svg></div></div>
<div class="row" style="top:363.70px"><div class="ab" style="left:3.7px;top:1.4px"><svg class="tux" viewBox="0 0 20 18" width="17.6" height="17.1" preserveAspectRatio="none"><path d="M10.1 2.5c-1.3 0-2.1 1-2.1 2.4 0 .9.1 1.4-.4 2.2C6.6 8.6 5.4 10.4 5.4 12.6c0 1.1.3 2 .8 2.7h8.4c.5-.7.8-1.6.8-2.7 0-2.2-1.2-4-2.2-5.5-.5-.8-.4-1.3-.4-2.2 0-1.4-.8-2.4-2.1-2.4z" fill="#151515"/><ellipse cx="10.3" cy="11.4" rx="3.1" ry="4" fill="#d9d9d9"/><ellipse cx="10.5" cy="11.6" rx="2.2" ry="3.3" fill="#f7f7f7"/><ellipse cx="10.1" cy="6.5" rx="1.7" ry=".9" fill="#f5b400"/><path d="M4.9 13.6c.5-.6 1.3-1.4 1.7-2.1.3-.4.9-.4 1.2 0 .4.7.8 1.6 1 2.3.3.9-.2 1.6-1 1.6-.9 0-1.8-.3-2.5-.6-.6-.3-.7-.8-.4-1.2z" fill="#f5b400"/><path d="M15.2 13.6c-.5-.6-1.1-1.4-1.5-2.1-.3-.4-.9-.4-1.2 0-.4.7-.8 1.6-1 2.3-.3.9.2 1.6 1 1.6.8 0 1.7-.3 2.3-.6.6-.3.7-.8.4-1.2z" fill="#f5b400"/></svg></div><div class="lbl" style="left:30.5px">lon01.xitoring.com</div><div class="bd g" style="left:123.3px;width:19.3px">PING</div><div class="bd g" style="left:144.3px;width:29.2px">HTTP(S)</div><div class="bd s" style="left:175.5px;width:17.2px">DNS</div><div class="bd s" style="left:194.8px;width:15.7px">FTP</div><div class="bd s" style="left:212.7px;width:20.8px">SMTP</div><div class="bd s" style="left:235.7px;width:21.5px">POP3</div><div class="bd s" style="left:258.6px;width:19.4px">IMAP</div><div class="bd s" style="left:280.1px;width:15.0px">SSL</div><div class="bd s" style="left:297.2px;width:16.6px">TCP</div><div class="bd s" style="left:315.9px;width:17.7px">UDP</div><div class="bd g" style="left:335.7px;width:37.5px">HEARTBEAT</div><div class="txt" style="left:402px">28.79 %</div><div class="txt" style="left:452px">44.00 %</div><div class="txt" style="left:501.3px;letter-spacing:.22px">Xitoring</div><div class="ab" style="left:529.5px;top:7.3px"><svg viewBox="0 0 8 8" width="8" height="8"><path d="M.3 4H7.2M4.3 1.1L7.2 4L4.3 6.9" fill="none" stroke="#2a2a2a" stroke-width=".95"/></svg></div><div class="txt" style="left:540.3px;letter-spacing:.25px">Node</div><div class="ab" style="left:598px;top:7.3px"><svg viewBox="0 0 24 24" width="9" height="9"><path fill="#111" d="M19.14 12.94c.04-.3.06-.61.06-.94 0-.32-.02-.64-.07-.94l2.03-1.58a.49.49 0 0 0 .12-.61l-1.92-3.32a.488.488 0 0 0-.59-.22l-2.39.96c-.5-.38-1.03-.7-1.62-.94l-.36-2.54a.484.484 0 0 0-.48-.41h-3.84c-.24 0-.43.17-.47.41l-.36 2.54c-.59.24-1.13.57-1.62.94l-2.39-.96c-.22-.08-.47 0-.59.22L2.74 8.87c-.12.21-.08.47.12.61l2.03 1.58c-.05.3-.09.63-.09.94s.02.64.07.94l-2.03 1.58a.49.49 0 0 0-.12.61l1.92 3.32c.12.22.37.29.59.22l2.39-.96c.5.38 1.03.7 1.62.94l.36 2.54c.05.24.24.41.48.41h3.84c.24 0 .44-.17.47-.41l.36-2.54c.59-.24 1.13-.56 1.62-.94l2.39.96c.22.08.47 0 .59-.22l1.92-3.32c.12-.22.07-.47-.12-.61l-2.01-1.58zM12 15.6c-1.98 0-3.6-1.62-3.6-3.6s1.62-3.6 3.6-3.6 3.6 1.62 3.6 3.6-1.62 3.6-3.6 3.6z"/></svg></div><div class="ab" style="left:619.3px;top:6.8px"><svg viewBox="0 0 24 24" width="10" height="10"><path fill="#111" d="M12 4.5C7 4.5 2.73 7.61 1 12c1.73 4.39 6 7.5 11 7.5s9.27-3.11 11-7.5c-1.73-4.39-6-7.5-11-7.5zM12 17c-2.76 0-5-2.24-5-5s2.24-5 5-5 5 2.24 5 5-2.24 5-5 5zm0-8c-1.66 0-3 1.34-3 3s1.34 3 3 3 3-1.34 3-3-1.34-3-3-3z"/></svg></div><div class="ab" style="left:643.3px;top:8.1px"><svg viewBox="0 0 3 7" width="3" height="7"><circle cx="1.5" cy=".85" r=".9" fill="#000"/><circle cx="1.5" cy="3.5" r=".9" fill="#000"/><circle cx="1.5" cy="6.15" r=".9" fill="#000"/></svg></div></div>
<div class="row" style="top:386.22px"><div class="ab" style="left:3.7px;top:1.4px"><svg class="tux" viewBox="0 0 20 18" width="17.6" height="17.1" preserveAspectRatio="none"><path d="M10.1 2.5c-1.3 0-2.1 1-2.1 2.4 0 .9.1 1.4-.4 2.2C6.6 8.6 5.4 10.4 5.4 12.6c0 1.1.3 2 .8 2.7h8.4c.5-.7.8-1.6.8-2.7 0-2.2-1.2-4-2.2-5.5-.5-.8-.4-1.3-.4-2.2 0-1.4-.8-2.4-2.1-2.4z" fill="#151515"/><ellipse cx="10.3" cy="11.4" rx="3.1" ry="4" fill="#d9d9d9"/><ellipse cx="10.5" cy="11.6" rx="2.2" ry="3.3" fill="#f7f7f7"/><ellipse cx="10.1" cy="6.5" rx="1.7" ry=".9" fill="#f5b400"/><path d="M4.9 13.6c.5-.6 1.3-1.4 1.7-2.1.3-.4.9-.4 1.2 0 .4.7.8 1.6 1 2.3.3.9-.2 1.6-1 1.6-.9 0-1.8-.3-2.5-.6-.6-.3-.7-.8-.4-1.2z" fill="#f5b400"/><path d="M15.2 13.6c-.5-.6-1.1-1.4-1.5-2.1-.3-.4-.9-.4-1.2 0-.4.7-.8 1.6-1 2.3-.3.9.2 1.6 1 1.6.8 0 1.7-.3 2.3-.6.6-.3.7-.8.4-1.2z" fill="#f5b400"/></svg></div><div class="lbl" style="left:30.5px">sat01.xitoring.com</div><div class="bd g" style="left:123.3px;width:19.3px">PING</div><div class="bd g" style="left:144.3px;width:29.2px">HTTP(S)</div><div class="bd s" style="left:175.5px;width:17.2px">DNS</div><div class="bd s" style="left:194.8px;width:15.7px">FTP</div><div class="bd s" style="left:212.7px;width:20.8px">SMTP</div><div class="bd s" style="left:235.7px;width:21.5px">POP3</div><div class="bd s" style="left:258.6px;width:19.4px">IMAP</div><div class="bd s" style="left:280.1px;width:15.0px">SSL</div><div class="bd s" style="left:297.2px;width:16.6px">TCP</div><div class="bd s" style="left:315.9px;width:17.7px">UDP</div><div class="bd g" style="left:335.7px;width:37.5px">HEARTBEAT</div><div class="txt" style="left:402px">29.73 %</div><div class="txt" style="left:452px">47.00 %</div><div class="txt" style="left:501.3px;letter-spacing:.22px">Xitoring</div><div class="ab" style="left:529.5px;top:7.3px"><svg viewBox="0 0 8 8" width="8" height="8"><path d="M.3 4H7.2M4.3 1.1L7.2 4L4.3 6.9" fill="none" stroke="#2a2a2a" stroke-width=".95"/></svg></div><div class="txt" style="left:540.3px;letter-spacing:.25px">Node</div><div class="ab" style="left:598px;top:7.3px"><svg viewBox="0 0 24 24" width="9" height="9"><path fill="#111" d="M19.14 12.94c.04-.3.06-.61.06-.94 0-.32-.02-.64-.07-.94l2.03-1.58a.49.49 0 0 0 .12-.61l-1.92-3.32a.488.488 0 0 0-.59-.22l-2.39.96c-.5-.38-1.03-.7-1.62-.94l-.36-2.54a.484.484 0 0 0-.48-.41h-3.84c-.24 0-.43.17-.47.41l-.36 2.54c-.59.24-1.13.57-1.62.94l-2.39-.96c-.22-.08-.47 0-.59.22L2.74 8.87c-.12.21-.08.47.12.61l2.03 1.58c-.05.3-.09.63-.09.94s.02.64.07.94l-2.03 1.58a.49.49 0 0 0-.12.61l1.92 3.32c.12.22.37.29.59.22l2.39-.96c.5.38 1.03.7 1.62.94l.36 2.54c.05.24.24.41.48.41h3.84c.24 0 .44-.17.47-.41l.36-2.54c.59-.24 1.13-.56 1.62-.94l2.39.96c.22.08.47 0 .59-.22l1.92-3.32c.12-.22.07-.47-.12-.61l-2.01-1.58zM12 15.6c-1.98 0-3.6-1.62-3.6-3.6s1.62-3.6 3.6-3.6 3.6 1.62 3.6 3.6-1.62 3.6-3.6 3.6z"/></svg></div><div class="ab" style="left:619.3px;top:6.8px"><svg viewBox="0 0 24 24" width="10" height="10"><path fill="#111" d="M12 4.5C7 4.5 2.73 7.61 1 12c1.73 4.39 6 7.5 11 7.5s9.27-3.11 11-7.5c-1.73-4.39-6-7.5-11-7.5zM12 17c-2.76 0-5-2.24-5-5s2.24-5 5-5 5 2.24 5 5-2.24 5-5 5zm0-8c-1.66 0-3 1.34-3 3s1.34 3 3 3 3-1.34 3-3-1.34-3-3-3z"/></svg></div><div class="ab" style="left:643.3px;top:8.1px"><svg viewBox="0 0 3 7" width="3" height="7"><circle cx="1.5" cy=".85" r=".9" fill="#000"/><circle cx="1.5" cy="3.5" r=".9" fill="#000"/><circle cx="1.5" cy="6.15" r=".9" fill="#000"/></svg></div></div>
<div class="row" style="top:408.74px"><div class="ab" style="left:3.7px;top:1.4px"><svg class="tux" viewBox="0 0 20 18" width="17.6" height="17.1" preserveAspectRatio="none"><path d="M10.1 2.5c-1.3 0-2.1 1-2.1 2.4 0 .9.1 1.4-.4 2.2C6.6 8.6 5.4 10.4 5.4 12.6c0 1.1.3 2 .8 2.7h8.4c.5-.7.8-1.6.8-2.7 0-2.2-1.2-4-2.2-5.5-.5-.8-.4-1.3-.4-2.2 0-1.4-.8-2.4-2.1-2.4z" fill="#151515"/><ellipse cx="10.3" cy="11.4" rx="3.1" ry="4" fill="#d9d9d9"/><ellipse cx="10.5" cy="11.6" rx="2.2" ry="3.3" fill="#f7f7f7"/><ellipse cx="10.1" cy="6.5" rx="1.7" ry=".9" fill="#f5b400"/><path d="M4.9 13.6c.5-.6 1.3-1.4 1.7-2.1.3-.4.9-.4 1.2 0 .4.7.8 1.6 1 2.3.3.9-.2 1.6-1 1.6-.9 0-1.8-.3-2.5-.6-.6-.3-.7-.8-.4-1.2z" fill="#f5b400"/><path d="M15.2 13.6c-.5-.6-1.1-1.4-1.5-2.1-.3-.4-.9-.4-1.2 0-.4.7-.8 1.6-1 2.3-.3.9.2 1.6 1 1.6.8 0 1.7-.3 2.3-.6.6-.3.7-.8.4-1.2z" fill="#f5b400"/></svg></div><div class="lbl" style="left:30.5px">tor01.xitoring.com</div><div class="bd g" style="left:123.3px;width:19.3px">PING</div><div class="bd g" style="left:144.3px;width:29.2px">HTTP(S)</div><div class="bd s" style="left:175.5px;width:17.2px">DNS</div><div class="bd s" style="left:194.8px;width:15.7px">FTP</div><div class="bd s" style="left:212.7px;width:20.8px">SMTP</div><div class="bd s" style="left:235.7px;width:21.5px">POP3</div><div class="bd s" style="left:258.6px;width:19.4px">IMAP</div><div class="bd s" style="left:280.1px;width:15.0px">SSL</div><div class="bd s" style="left:297.2px;width:16.6px">TCP</div><div class="bd s" style="left:315.9px;width:17.7px">UDP</div><div class="bd g" style="left:335.7px;width:37.5px">HEARTBEAT</div><div class="txt" style="left:402px">47.47 %</div><div class="txt" style="left:452px">83.00 %</div><div class="txt" style="left:501.3px;letter-spacing:.22px">Xitoring</div><div class="ab" style="left:529.5px;top:7.3px"><svg viewBox="0 0 8 8" width="8" height="8"><path d="M.3 4H7.2M4.3 1.1L7.2 4L4.3 6.9" fill="none" stroke="#2a2a2a" stroke-width=".95"/></svg></div><div class="txt" style="left:540.3px;letter-spacing:.25px">Node</div><div class="ab" style="left:598px;top:7.3px"><svg viewBox="0 0 24 24" width="9" height="9"><path fill="#111" d="M19.14 12.94c.04-.3.06-.61.06-.94 0-.32-.02-.64-.07-.94l2.03-1.58a.49.49 0 0 0 .12-.61l-1.92-3.32a.488.488 0 0 0-.59-.22l-2.39.96c-.5-.38-1.03-.7-1.62-.94l-.36-2.54a.484.484 0 0 0-.48-.41h-3.84c-.24 0-.43.17-.47.41l-.36 2.54c-.59.24-1.13.57-1.62.94l-2.39-.96c-.22-.08-.47 0-.59.22L2.74 8.87c-.12.21-.08.47.12.61l2.03 1.58c-.05.3-.09.63-.09.94s.02.64.07.94l-2.03 1.58a.49.49 0 0 0-.12.61l1.92 3.32c.12.22.37.29.59.22l2.39-.96c.5.38 1.03.7 1.62.94l.36 2.54c.05.24.24.41.48.41h3.84c.24 0 .44-.17.47-.41l.36-2.54c.59-.24 1.13-.56 1.62-.94l2.39.96c.22.08.47 0 .59-.22l1.92-3.32c.12-.22.07-.47-.12-.61l-2.01-1.58zM12 15.6c-1.98 0-3.6-1.62-3.6-3.6s1.62-3.6 3.6-3.6 3.6 1.62 3.6 3.6-1.62 3.6-3.6 3.6z"/></svg></div><div class="ab" style="left:619.3px;top:6.8px"><svg viewBox="0 0 24 24" width="10" height="10"><path fill="#111" d="M12 4.5C7 4.5 2.73 7.61 1 12c1.73 4.39 6 7.5 11 7.5s9.27-3.11 11-7.5c-1.73-4.39-6-7.5-11-7.5zM12 17c-2.76 0-5-2.24-5-5s2.24-5 5-5 5 2.24 5 5-2.24 5-5 5zm0-8c-1.66 0-3 1.34-3 3s1.34 3 3 3 3-1.34 3-3-1.34-3-3-3z"/></svg></div><div class="ab" style="left:643.3px;top:8.1px"><svg viewBox="0 0 3 7" width="3" height="7"><circle cx="1.5" cy=".85" r=".9" fill="#000"/><circle cx="1.5" cy="3.5" r=".9" fill="#000"/><circle cx="1.5" cy="6.15" r=".9" fill="#000"/></svg></div></div>
<div class="row" style="top:431.26px"><div class="ab" style="left:3.7px;top:1.4px"><svg class="tux" viewBox="0 0 20 18" width="17.6" height="17.1" preserveAspectRatio="none"><path d="M10.1 2.5c-1.3 0-2.1 1-2.1 2.4 0 .9.1 1.4-.4 2.2C6.6 8.6 5.4 10.4 5.4 12.6c0 1.1.3 2 .8 2.7h8.4c.5-.7.8-1.6.8-2.7 0-2.2-1.2-4-2.2-5.5-.5-.8-.4-1.3-.4-2.2 0-1.4-.8-2.4-2.1-2.4z" fill="#151515"/><ellipse cx="10.3" cy="11.4" rx="3.1" ry="4" fill="#d9d9d9"/><ellipse cx="10.5" cy="11.6" rx="2.2" ry="3.3" fill="#f7f7f7"/><ellipse cx="10.1" cy="6.5" rx="1.7" ry=".9" fill="#f5b400"/><path d="M4.9 13.6c.5-.6 1.3-1.4 1.7-2.1.3-.4.9-.4 1.2 0 .4.7.8 1.6 1 2.3.3.9-.2 1.6-1 1.6-.9 0-1.8-.3-2.5-.6-.6-.3-.7-.8-.4-1.2z" fill="#f5b400"/><path d="M15.2 13.6c-.5-.6-1.1-1.4-1.5-2.1-.3-.4-.9-.4-1.2 0-.4.7-.8 1.6-1 2.3-.3.9.2 1.6 1 1.6.8 0 1.7-.3 2.3-.6.6-.3.7-.8.4-1.2z" fill="#f5b400"/></svg></div><div class="lbl" style="left:30.5px">vir01.xitoring.com</div><div class="bd g" style="left:123.3px;width:19.3px">PING</div><div class="bd g" style="left:144.3px;width:29.2px">HTTP(S)</div><div class="bd s" style="left:175.5px;width:17.2px">DNS</div><div class="bd s" style="left:194.8px;width:15.7px">FTP</div><div class="bd s" style="left:212.7px;width:20.8px">SMTP</div><div class="bd s" style="left:235.7px;width:21.5px">POP3</div><div class="bd s" style="left:258.6px;width:19.4px">IMAP</div><div class="bd s" style="left:280.1px;width:15.0px">SSL</div><div class="bd s" style="left:297.2px;width:16.6px">TCP</div><div class="bd s" style="left:315.9px;width:17.7px">UDP</div><div class="bd g" style="left:335.7px;width:37.5px">HEARTBEAT</div><div class="txt" style="left:402px">47.96 %</div><div class="txt" style="left:452px">47.00 %</div><div class="txt" style="left:501.3px;letter-spacing:.22px">Xitoring</div><div class="ab" style="left:529.5px;top:7.3px"><svg viewBox="0 0 8 8" width="8" height="8"><path d="M.3 4H7.2M4.3 1.1L7.2 4L4.3 6.9" fill="none" stroke="#2a2a2a" stroke-width=".95"/></svg></div><div class="txt" style="left:540.3px;letter-spacing:.25px">Node</div><div class="ab" style="left:598px;top:7.3px"><svg viewBox="0 0 24 24" width="9" height="9"><path fill="#111" d="M19.14 12.94c.04-.3.06-.61.06-.94 0-.32-.02-.64-.07-.94l2.03-1.58a.49.49 0 0 0 .12-.61l-1.92-3.32a.488.488 0 0 0-.59-.22l-2.39.96c-.5-.38-1.03-.7-1.62-.94l-.36-2.54a.484.484 0 0 0-.48-.41h-3.84c-.24 0-.43.17-.47.41l-.36 2.54c-.59.24-1.13.57-1.62.94l-2.39-.96c-.22-.08-.47 0-.59.22L2.74 8.87c-.12.21-.08.47.12.61l2.03 1.58c-.05.3-.09.63-.09.94s.02.64.07.94l-2.03 1.58a.49.49 0 0 0-.12.61l1.92 3.32c.12.22.37.29.59.22l2.39-.96c.5.38 1.03.7 1.62.94l.36 2.54c.05.24.24.41.48.41h3.84c.24 0 .44-.17.47-.41l.36-2.54c.59-.24 1.13-.56 1.62-.94l2.39.96c.22.08.47 0 .59-.22l1.92-3.32c.12-.22.07-.47-.12-.61l-2.01-1.58zM12 15.6c-1.98 0-3.6-1.62-3.6-3.6s1.62-3.6 3.6-3.6 3.6 1.62 3.6 3.6-1.62 3.6-3.6 3.6z"/></svg></div><div class="ab" style="left:619.3px;top:6.8px"><svg viewBox="0 0 24 24" width="10" height="10"><path fill="#111" d="M12 4.5C7 4.5 2.73 7.61 1 12c1.73 4.39 6 7.5 11 7.5s9.27-3.11 11-7.5c-1.73-4.39-6-7.5-11-7.5zM12 17c-2.76 0-5-2.24-5-5s2.24-5 5-5 5 2.24 5 5-2.24 5-5 5zm0-8c-1.66 0-3 1.34-3 3s1.34 3 3 3 3-1.34 3-3-1.34-3-3-3z"/></svg></div><div class="ab" style="left:643.3px;top:8.1px"><svg viewBox="0 0 3 7" width="3" height="7"><circle cx="1.5" cy=".85" r=".9" fill="#000"/><circle cx="1.5" cy="3.5" r=".9" fill="#000"/><circle cx="1.5" cy="6.15" r=".9" fill="#000"/></svg></div></div>
  </div>
 </div>
 <div id="tblb"></div>
</div>
</body></html>
